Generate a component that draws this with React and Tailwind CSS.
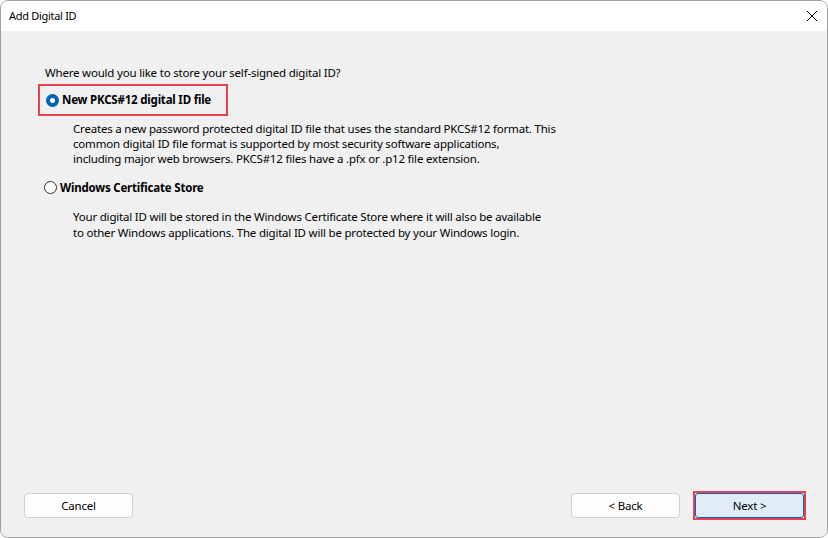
import React from "react";

function Radio({ checked }) {
  return checked ? (
    <span className="w-[13px] h-[13px] rounded-full bg-[#0063b1] flex items-center justify-center shrink-0">
      <span className="w-[5px] h-[5px] rounded-full bg-white" />
    </span>
  ) : (
    <span className="w-[13px] h-[13px] rounded-full border border-[#333] bg-white shrink-0" />
  );
}

export default function App() {
  return (
    <div
      className="w-[828px] h-[538px] bg-white text-[11.5px] tracking-[-0.2px] text-black"
      style={{ fontFamily: '"Noto Sans", "Open Sans", sans-serif' }}
    >
      <div className="w-full h-full border border-[#a0a0a0] rounded-[8px] overflow-hidden flex flex-col">
        <div className="h-[30px] bg-white flex items-center justify-between pl-[8px] pr-[9px] shrink-0">
          <span className="text-[11px] tracking-[-0.3px]">Add Digital ID</span>
          <svg width="12" height="12" viewBox="0 0 12 12" className="text-black">
            <path d="M1 1L11 11M11 1L1 11" stroke="currentColor" strokeWidth="1" />
          </svg>
        </div>
        <div className="flex-1 bg-[#f0f0f0] flex flex-col">
          <div className="pl-[44px] pt-[34px] flex-1 whitespace-nowrap">
            <p className="leading-[15px]">Where would you like to store your self-signed digital ID?</p>
            <div className="mt-[4px] -ml-[7px] w-[190px] h-[32px] border-2 border-[#e8414b] flex items-center gap-[3px] pl-[6px]">
              <Radio checked />
              <span className="font-bold">New PKCS#12 digital ID file</span>
            </div>
            <div className="pl-[28px] mt-[5px] leading-[15px]">
              Creates a new password protected digital ID file that uses the standard PKCS#12 format. This
              <br />
              common digital ID file format is supported by most security software applications,
              <br />
              including major web browsers. PKCS#12 files have a .pfx or .p12 file extension.
            </div>
            <div className="mt-[13px] flex items-center gap-[3px] -ml-[1px]">
              <Radio />
              <span className="font-bold">Windows Certificate Store</span>
            </div>
            <div className="pl-[28px] mt-[13px] leading-[16px]">
              Your digital ID will be stored in the Windows Certificate Store where it will also be available
              <br />
              to other Windows applications. The digital ID will be protected by your Windows login.
            </div>
          </div>
          <div className="flex items-center justify-between pl-[23px] pr-[21px] pb-[17px]">
            <button className="w-[109px] h-[25px] bg-[#fdfdfd] border border-[#d0d0d0] rounded-[4px]">
              Cancel
            </button>
            <div className="flex items-center gap-[13px]">
              <button className="w-[109px] h-[25px] bg-[#fdfdfd] border border-[#d0d0d0] rounded-[4px]">
                &lt; Back
              </button>
              <div className="border-2 border-[#e8414b]">
                <button className="w-[109px] h-[25px] bg-[#e0ecf6] border border-[#0067c0] rounded-[3px] block">
                  Next &gt;
                </button>
              </div>
            </div>
          </div>
        </div>
      </div>
    </div>
  );
}
